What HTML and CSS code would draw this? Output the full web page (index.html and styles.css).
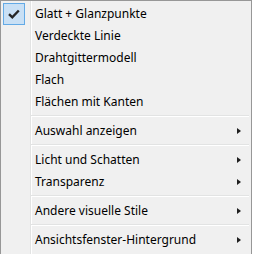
FILE: index.html
```html
<!DOCTYPE html>
<html>
<head>
<meta charset="utf-8">
<link rel="stylesheet" href="styles.css">
</head>
<body>
<div class="menu">
  <div class="item checked">
    <span class="check"><svg width="12" height="10" viewBox="0 0 12 10"><path d="M1 5.2 L4.3 8.3 L10.8 1.5" fill="none" stroke="#262626" stroke-width="2.4"/></svg></span>
    <span class="label">Glatt + Glanzpunkte</span>
  </div>
  <div class="item"><span class="label">Verdeckte Linie</span></div>
  <div class="item"><span class="label">Drahtgittermodell</span></div>
  <div class="item"><span class="label">Flach</span></div>
  <div class="item"><span class="label">Flächen mit Kanten</span></div>
  <div class="sep"></div>
  <div class="item"><span class="label">Auswahl anzeigen</span><span class="arrow"></span></div>
  <div class="sep"></div>
  <div class="item"><span class="label">Licht und Schatten</span><span class="arrow"></span></div>
  <div class="item"><span class="label">Transparenz</span><span class="arrow"></span></div>
  <div class="sep"></div>
  <div class="item"><span class="label">Andere visuelle Stile</span><span class="arrow"></span></div>
  <div class="sep"></div>
  <div class="item"><span class="label">Ansichtsfenster-Hintergrund</span><span class="arrow"></span></div>
</div>
</body>
</html>
```
FILE: styles.css
```css
html, body { margin: 0; padding: 0; background: #ffffff; }
.menu {
  width: 246px;
  height: 249px;
  border: 1px solid #979797;
  padding: 2px;
  background-color: #f0f0f0;
  background-image: linear-gradient(to right, transparent 30px, #e2e3e3 30px, #e2e3e3 31px, #ffffff 31px, #ffffff 32px, transparent 32px);
  background-repeat: no-repeat;
  background-origin: border-box;
  display: flex;
  flex-direction: column;
  font-family: "Noto Sans", "Open Sans", sans-serif;
  font-size: 12px;
  color: #000;
}
.item {
  position: relative;
  height: 22px;
  display: flex;
  align-items: center;
  padding-left: 32px;
}
.label { flex: 1; line-height: 22px; }
.check {
  position: absolute;
  left: 0;
  top: 0;
  width: 20px;
  height: 20px;
  border: 1px solid #63aae6;
  background: #c9e0f5;
  display: flex;
  align-items: center;
  justify-content: center;
}
.arrow {
  width: 0;
  height: 0;
  border-left: 4px solid #1f1f1f;
  border-top: 3.5px solid transparent;
  border-bottom: 3.5px solid transparent;
  margin-right: 8px;
}
.sep {
  height: 1px;
  margin: 2px 0 3px 28px;
  background: #e2e3e3;
  border-bottom: 1px solid #ffffff;
}
```
